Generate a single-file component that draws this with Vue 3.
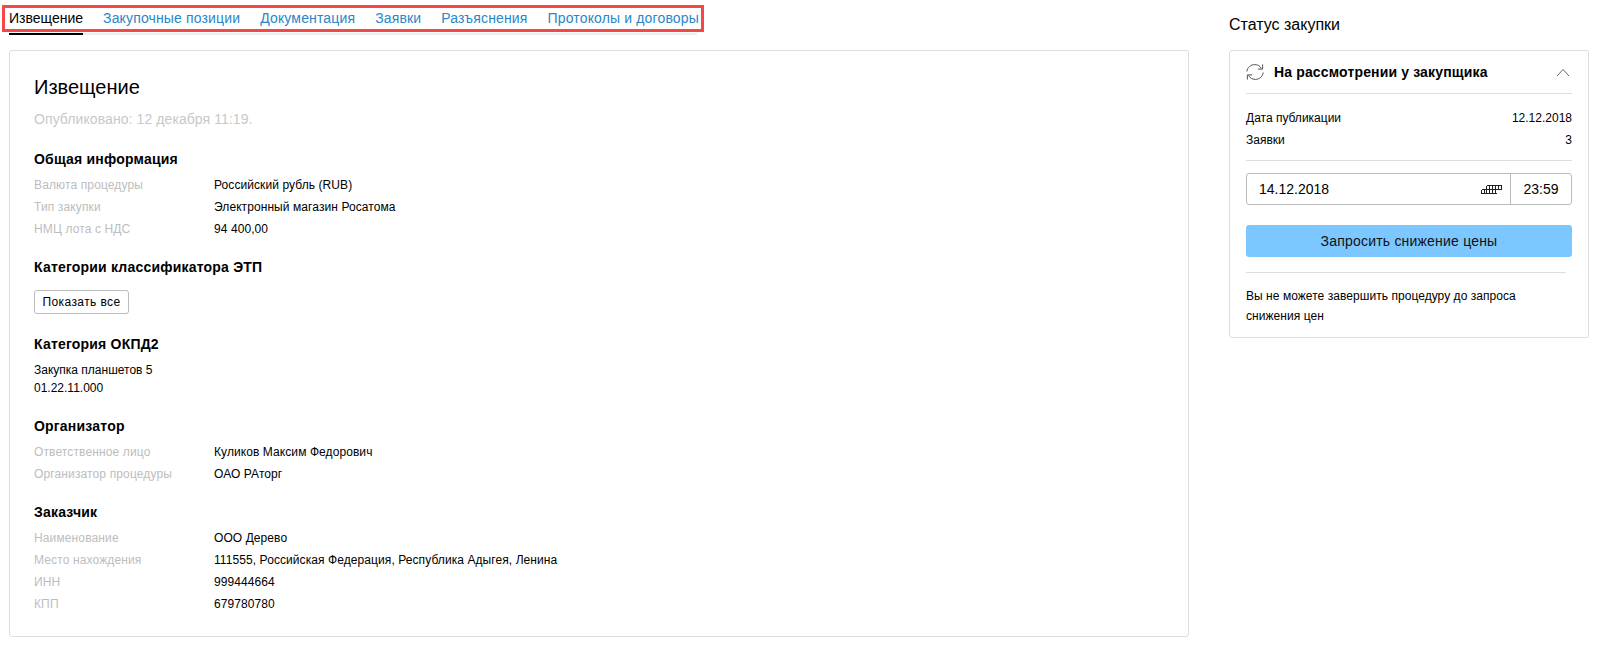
<script setup>
const tabs = ['Извещение', 'Закупочные позиции', 'Документация', 'Заявки', 'Разъяснения', 'Протоколы и договоры'];
const general = [
  ['Валюта процедуры', 'Российский рубль (RUB)'],
  ['Тип закупки', 'Электронный магазин Росатома'],
  ['НМЦ лота с НДС', '94 400,00'],
];
const organizer = [
  ['Ответственное лицо', 'Куликов Максим Федорович'],
  ['Организатор процедуры', 'ОАО РАторг'],
];
const customer = [
  ['Наименование', 'ООО Дерево'],
  ['Место нахождения', '111555, Российская Федерация, Республика Адыгея, Ленина'],
  ['ИНН', '999444664'],
  ['КПП', '679780780'],
];
</script>

<template>
  <div class="page">
    <main class="mainCol">
      <nav class="tabs">
        <a
          v-for="(tab, i) in tabs"
          :key="tab"
          class="tab"
          :class="{ tabActive: i === 0 }"
        >{{ tab }}</a>
        <div class="tabsMark" />
      </nav>

      <section class="card">
        <h1 class="title">Извещение</h1>
        <p class="published">Опубликовано: 12 декабря 11:19.</p>

        <h2 class="heading">Общая информация</h2>
        <div class="rows">
          <div v-for="row in general" :key="row[0]" class="row">
            <span class="label">{{ row[0] }}</span>
            <span class="value">{{ row[1] }}</span>
          </div>
        </div>

        <h2 class="heading headingNext">Категории классификатора ЭТП</h2>
        <button type="button" class="showAll">Показать все</button>

        <h2 class="heading headingOkpd">Категория ОКПД2</h2>
        <div class="okpd">
          <div>Закупка планшетов 5</div>
          <div>01.22.11.000</div>
        </div>

        <h2 class="heading headingOrg">Организатор</h2>
        <div class="rows">
          <div v-for="row in organizer" :key="row[0]" class="row">
            <span class="label">{{ row[0] }}</span>
            <span class="value">{{ row[1] }}</span>
          </div>
        </div>

        <h2 class="heading headingNext">Заказчик</h2>
        <div class="rows">
          <div v-for="row in customer" :key="row[0]" class="row">
            <span class="label">{{ row[0] }}</span>
            <span class="value">{{ row[1] }}</span>
          </div>
        </div>
      </section>
    </main>

    <aside class="side">
      <h2 class="sideTitle">Статус закупки</h2>
      <div class="statusCard">
        <div class="statusHead">
          <svg class="refresh" width="18" height="18" viewBox="0 0 18 18" fill="none" stroke="#555" stroke-width="1">
            <path d="M.8 8.5C1.3 4.6 4.6 1.6 8.7 1.6c3.1 0 5.4 1.4 6.7 4" />
            <path d="M16.6 1.4v4.7h-4.7" />
            <path d="M17.2 9.5c-.5 3.9-3.8 6.9-7.9 6.9-3.1 0-5.4-1.4-6.7-4" />
            <path d="M1.4 16.6v-4.7h4.7" />
          </svg>
          <strong class="statusName">На рассмотрении у закупщика</strong>
          <svg class="chevron" width="14" height="9" viewBox="0 0 14 9" fill="none" stroke="#666" stroke-width="1">
            <path d="M1 8l6-6.5L13 8" />
          </svg>
        </div>

        <div class="facts">
          <div class="fact"><span>Дата публикации</span><span>12.12.2018</span></div>
          <div class="fact"><span>Заявки</span><span>3</span></div>
        </div>

        <div class="dateField">
          <div class="dateValue">
            <span>14.12.2018</span>
            <svg width="21" height="9" viewBox="0 0 21 9" fill="none" stroke="#222" stroke-width="1" shape-rendering="crispEdges">
              <path d="M5.5 .5h15v4h-3M.5 8.5h15M.5 4.5h17M.5 4.5v4M3.5 4.5v4M5.5 .5v8M8.5 .5v8M11.5 .5v8M14.5 .5v8M17.5 .5v4" />
            </svg>
          </div>
          <div class="timeValue">23:59</div>
        </div>

        <button type="button" class="requestBtn">Запросить снижение цены</button>

        <p class="note">Вы не можете завершить процедуру до запроса снижения цен</p>
      </div>
    </aside>
  </div>
</template>

<style scoped>
.page {
  box-sizing: border-box;
  color: #000;
  display: flex;
  font-family: "Liberation Sans", Arial, sans-serif;
  font-size: 12px;
  height: 646px;
  padding: 0 8px 0 9px;
}

.mainCol {
  flex: 0 0 1180px;
}

.tabs {
  border-bottom: 2px solid #eee;
  box-sizing: border-box;
  display: flex;
  gap: 20px;
  height: 35px;
  position: relative;
  width: 688px;
}

.tab {
  color: #2a86c8;
  font-size: 14px;
  letter-spacing: 0.15px;
  line-height: 36px;
  margin-bottom: -2px;
  white-space: nowrap;
}

.tabActive {
  border-bottom: 2px solid #000;
  box-sizing: border-box;
  color: #000;
  letter-spacing: 0;
}

.tabsMark {
  border: 3px solid #f44848;
  box-sizing: border-box;
  height: 27px;
  left: -7px;
  pointer-events: none;
  position: absolute;
  top: 5px;
  width: 702px;
}

.card {
  background: #fff;
  border: 1px solid #ddd;
  border-radius: 3px;
  box-sizing: border-box;
  height: 587px;
  margin-top: 15px;
  padding: 22px 24px 21px;
}

.title {
  font-size: 20px;
  font-weight: 400;
  line-height: 28px;
  margin: 0;
}

.published {
  color: #c8c8c8;
  font-size: 14px;
  letter-spacing: 0.08px;
  line-height: 20px;
  margin: 8px 0 0;
}

.heading {
  font-size: 14px;
  font-weight: 700;
  letter-spacing: 0.2px;
  line-height: 20px;
  margin: 20px 0 5px;
}

.headingNext {
  margin-top: 17px;
}

.headingOkpd {
  margin-top: 20px;
}

.headingOrg {
  margin-top: 19px;
}

.row {
  display: grid;
  grid-template-columns: 180px 1fr;
  line-height: 22px;
}

.label {
  color: #bdbdbd;
  letter-spacing: 0.13px;
}

.value {
  letter-spacing: 0.08px;
}

.showAll {
  background: #fff;
  border: 1px solid #bbb;
  border-radius: 3px;
  color: #000;
  display: block;
  font-family: inherit;
  font-size: 12px;
  height: 24px;
  letter-spacing: 0.4px;
  margin-top: 13px;
  padding: 0;
  width: 95px;
}

.okpd {
  line-height: 18px;
  margin-top: 7px;
}

.side {
  flex: 1;
  margin-left: 40px;
}

.sideTitle {
  font-size: 16px;
  font-weight: 400;
  line-height: 20px;
  margin: 15px 0 15px;
}

.statusCard {
  border: 1px solid #ddd;
  border-radius: 3px;
  box-sizing: border-box;
  height: 288px;
  padding: 0 16px;
  width: 360px;
}

.statusHead {
  align-items: center;
  border-bottom: 1px solid #ddd;
  display: flex;
  height: 42px;
}

.refresh {
  flex: none;
}

.statusName {
  flex: 1;
  font-size: 14px;
  letter-spacing: 0.15px;
  margin-left: 10px;
}

.chevron {
  margin-right: 2px;
}

.facts {
  border-bottom: 1px solid #ddd;
  padding: 13px 0 9px;
}

.fact {
  display: flex;
  justify-content: space-between;
  line-height: 22px;
}

.dateField {
  border: 1px solid #bbb;
  border-radius: 3px;
  box-sizing: border-box;
  display: flex;
  font-size: 14px;
  height: 32px;
  margin-top: 12px;
}

.dateValue {
  align-items: center;
  border-right: 1px solid #bbb;
  display: flex;
  flex: 1;
  justify-content: space-between;
  padding: 0 8px 0 12px;
}

.timeValue {
  line-height: 30px;
  text-align: center;
  width: 60px;
}

.requestBtn {
  background: #7cc7ff;
  border: none;
  border-radius: 3px;
  color: #111;
  display: block;
  font-family: inherit;
  font-size: 14px;
  height: 32px;
  letter-spacing: 0.2px;
  margin-top: 20px;
  padding: 0;
  width: 100%;
}

.note {
  border-top: 1px solid #ddd;
  letter-spacing: 0.05px;
  line-height: 20px;
  margin: 15px 0 0;
  max-width: 320px;
  padding-top: 13px;
}
</style>
